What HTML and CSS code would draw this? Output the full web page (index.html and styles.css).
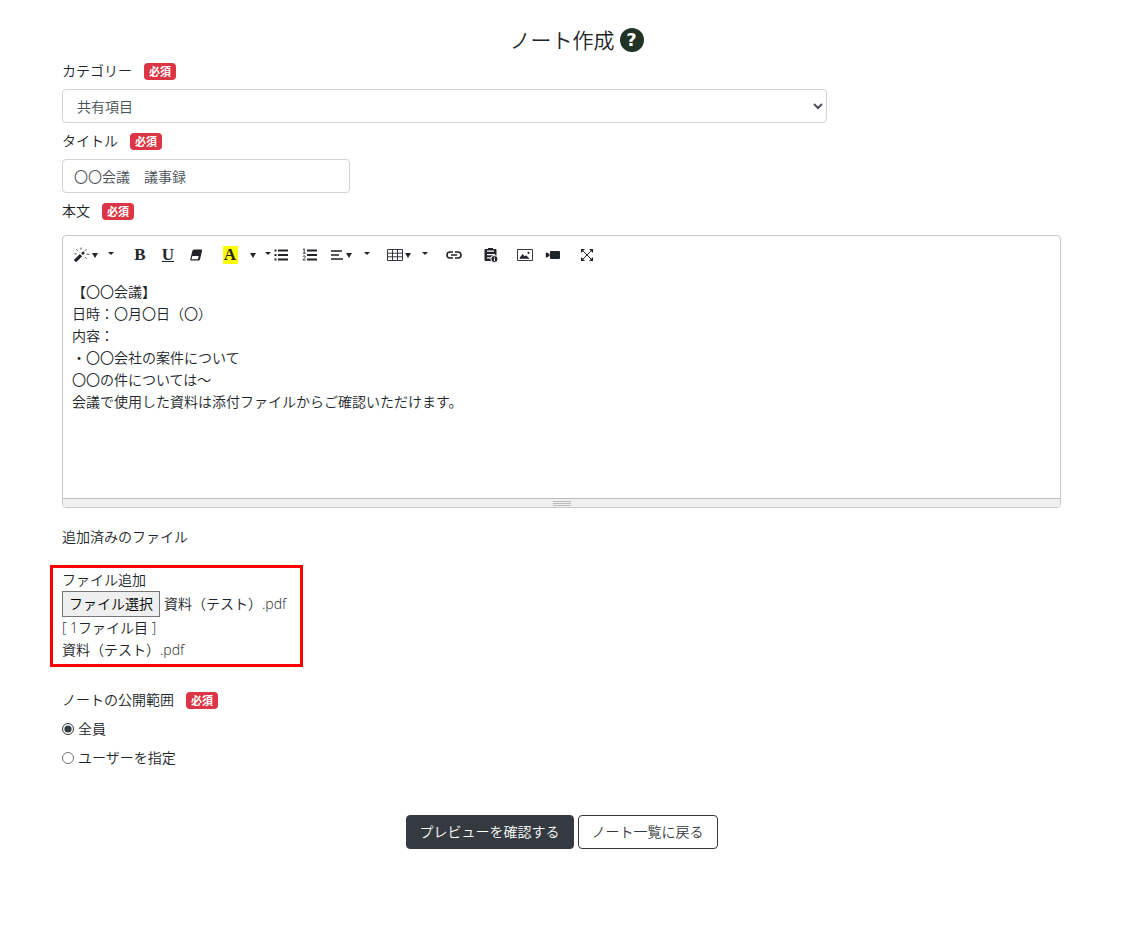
FILE: index.html
```html
<!DOCTYPE html>
<html lang="ja">
<head>
  <meta charset="UTF-8">
  <meta name="viewport" content="width=device-width, initial-scale=1.0">
  <title>ノート作成</title>
  <link rel="stylesheet" href="styles.css">
</head>
<body>
  <main class="container">
    <h1 class="page-title">ノート作成 <a class="help" href="#">?</a></h1>
    <form>
      <div class="form-label">
        <label for="category">カテゴリー</label><span class="badge">必須</span>
      </div>
      <select class="form-control category" id="category">
        <option>共有項目</option>
      </select>

      <div class="form-label">
        <label for="title">タイトル</label><span class="badge">必須</span>
      </div>
      <input class="form-control title" id="title" type="text" value="〇〇会議　議事録">

      <div class="form-label">
        <span id="body-label">本文</span><span class="badge">必須</span>
      </div>
      <div class="editor">
        <div class="toolbar">
          <div class="group">
            <button type="button" class="tool drop" aria-label="スタイル">
              <svg width="17" height="16" viewBox="0 0 17 16"><path d="M2 14.2 8 8.2" stroke-width="3.2"/><path d="M9 7.2l2-2" stroke-width="2.4"/><path d="M8 .5v2.2M3.3 2.3l1.5 1.5M13.2 2.3l-1.6 1.6M1.5 6.8h2.2M13.5 7.3h3M12 10.2l1.6 1.6" stroke-width=".8"/></svg><i class="caret"></i>
            </button>
            <button type="button" class="tool more" aria-label="その他のスタイル"><i class="caret small"></i></button>
          </div>
          <div class="group">
            <button type="button" class="tool letter">B</button>
            <button type="button" class="tool letter"><u>U</u></button>
            <button type="button" class="tool" aria-label="書式クリア">
              <svg width="14" height="14" viewBox="0 0 14 14"><path class="fill" d="M5 1.5h7q1.4 0 1.1 1.2l-2 8.3q-.3 1.5-1.5 1.5H2.4q-1.4 0-1.1-1.2l2-8.3q.3-1.5 1.7-1.5z"/><path class="hole" d="M3.3 8h6.4l-.8 3.2H2.5z"/></svg>
            </button>
          </div>
          <div class="group">
            <button type="button" class="tool letter"><span class="mark">A</span></button>
            <button type="button" class="tool more" aria-label="文字色"><i class="caret"></i></button>
            <button type="button" class="tool list-more" aria-label="その他の色"><i class="caret small"></i></button>
            <button type="button" class="tool list" aria-label="箇条書き">
              <svg width="16" height="14" viewBox="0 0 16 14"><path d="M4 2.5h10M4 7h10M4 11.5h10" stroke-width="2"/><path d="M.5 2.5h2M.5 7h2M.5 11.5h2" stroke-width="2"/></svg>
            </button>
            <button type="button" class="tool" aria-label="番号付きリスト">
              <svg width="16" height="14" viewBox="0 0 16 14"><path d="M5 2.5h10M5 7h10M5 11.5h10" stroke-width="2"/><path d="M1 1.5l1.2-.8v4.6M1 5.3h2.6M.9 8.6c.5-1.2 2.4-1 2.4.2 0 1-1.3 1.8-2.4 3.2h2.8" stroke-width=".9"/></svg>
            </button>
            <button type="button" class="tool drop" aria-label="段落">
              <svg width="14" height="14" viewBox="0 0 14 14"><path d="M1 3h11M1 7h8M1 11h12" stroke-width="1.6"/></svg><i class="caret"></i>
            </button>
            <button type="button" class="tool more" aria-label="その他の段落"><i class="caret small"></i></button>
          </div>
          <div class="group">
            <button type="button" class="tool drop" aria-label="表">
              <svg width="16" height="14" viewBox="0 0 16 14"><path d="M.5 1.5h15v11H.5zM.5 5.2h15M.5 8.8h15M5.5 1.5v11M10.5 1.5v11" stroke-width=".9"/></svg><i class="caret"></i>
            </button>
            <button type="button" class="tool more" aria-label="その他の表"><i class="caret small"></i></button>
          </div>
          <div class="group">
            <button type="button" class="tool" aria-label="リンク">
              <svg width="16" height="14" viewBox="0 0 16 14"><path d="M7 4H4a3 3 0 0 0 0 6h3M9 4h3a3 3 0 0 1 0 6H9M5 7h6" stroke-width="1.6"/></svg>
            </button>
          </div>
          <div class="group file">
            <button type="button" class="tool" aria-label="ファイル情報">
              <svg width="14" height="16" viewBox="0 0 14 16"><path class="fill" d="M1.5 2H4V1h5v1h2.5q1 0 1 1v11h-11q-1 0-1-1V3q0-1 1-1z"/><path class="hole" d="M3 3.6h7v1.2H3zM3 7h8v1.3H3zM3 10.3h4v1.3H3z"/><circle class="badge-dot" cx="10.4" cy="12" r="3.6"/><path class="light" d="M10.4 9.7v1M10.4 11.4v2.8"/></svg>
            </button>
          </div>
          <div class="group">
            <button type="button" class="tool" aria-label="画像">
              <svg width="16" height="14" viewBox="0 0 16 14"><path d="M.5 1.5h15v11H.5z" stroke-width=".9"/><path class="fill" d="M2.8 10.8V9.5L5.7 6l2 2.4 1.3-1.2 3.7 3.6z"/><circle class="fill" cx="11.5" cy="4.8" r="1.1"/></svg>
            </button>
            <button type="button" class="tool" aria-label="動画">
              <svg width="16" height="14" viewBox="0 0 16 14"><rect class="fill" x="5" y="3" width="10" height="8" rx="1"/><path class="fill" d="M.8 4.5h1L4.5 6v2L1.8 9.5h-1z"/></svg>
            </button>
          </div>
          <div class="group">
            <button type="button" class="tool" aria-label="フルスクリーン">
              <svg width="14" height="14" viewBox="0 0 14 14"><path d="M2.5 2.5l9 9M11.5 2.5l-9 9"/><path class="fill" d="M1 1h4L1 5zM13 1v4L9 1zM1 13V9l4 4zM13 13H9l4-4z"/></svg>
            </button>
          </div>
        </div>
        <div class="editable" contenteditable="true" role="textbox" aria-multiline="true" aria-labelledby="body-label">
          <p>【〇〇会議】</p>
          <p>日時：〇月〇日（〇）</p>
          <p>内容：</p>
          <p>・〇〇会社の案件について</p>
          <p>〇〇の件については～</p>
          <p>会議で使用した資料は添付ファイルからご確認いただけます。</p>
        </div>
        <div class="statusbar"><i></i><i></i><i></i></div>
      </div>

      <p class="added">追加済みのファイル</p>
      <div class="upload">
        <p>ファイル追加</p>
        <div class="picker">
          <input class="file-input" id="file" type="file">
          <label class="file-button" for="file">ファイル選択</label>
          <span>資料（テスト）.pdf</span>
        </div>
        <p>[ 1ファイル目 ]</p>
        <p>資料（テスト）.pdf</p>
      </div>

      <div class="form-label" id="scope-label">
        <span>ノートの公開範囲</span><span class="badge">必須</span>
      </div>
      <div class="scope" role="radiogroup" aria-labelledby="scope-label">
        <label><input type="radio" name="scope" checked>全員</label>
        <label><input type="radio" name="scope">ユーザーを指定</label>
      </div>

      <div class="actions">
        <button type="button" class="btn dark">プレビューを確認する</button>
        <button type="button" class="btn">ノート一覧に戻る</button>
      </div>
    </form>
  </main>
</body>
</html>
```
FILE: styles.css
```css
* {
  box-sizing: border-box;
}
body {
  margin: 0;
  background: #fff;
  color: #212529;
  font-family: "Open Sans", "Noto Sans CJK JP", sans-serif;
  font-size: 14px;
  font-weight: 350;
  line-height: 22px;
}
button, input, select {
  font: inherit;
}
p {
  margin: 0;
}
.container {
  padding: 24px 75px 24px 62px;
}
.page-title {
  display: flex;
  align-items: center;
  justify-content: center;
  gap: 5px;
  margin: 0 0 4px 30px;
  font-size: 21px;
  font-weight: 350;
  line-height: 32px;
}
.help {
  width: 24px;
  height: 24px;
  border-radius: 50%;
  background: #213324;
  color: #fff;
  font-family: "DejaVu Sans", sans-serif;
  font-size: 18px;
  font-weight: bold;
  line-height: 24px;
  text-align: center;
  text-decoration: none;
}
.form-label {
  display: flex;
  align-items: center;
  gap: 12px;
  margin-bottom: 7px;
}
.badge {
  padding: 0 5px;
  border-radius: 4px;
  background: #dc3545;
  color: #fff;
  font-size: 11px;
  font-weight: bold;
  line-height: 17px;
}
.form-control {
  display: block;
  height: 34px;
  margin-bottom: 7px;
  padding: 0 11px;
  border: 1px solid #ced4da;
  border-radius: 4px;
  background: #fff;
  color: #495057;
}
.category {
  width: 100%;
  max-width: 765px;
  padding: 0 0 0 10px;
}
.title {
  width: 288px;
}

/* editor */
.editor {
  margin-top: 13px;
  border: 1px solid #c8c8c8;
  border-radius: 4px;
  overflow: hidden;
}
.toolbar {
  display: flex;
  flex-wrap: wrap;
  padding: 5px 5px 2px;
}
.group {
  display: flex;
  margin-right: 6px;
}
.group.file {
  margin-left: 3px;
}
.tool {
  display: flex;
  align-items: center;
  justify-content: center;
  width: 28px;
  height: 28px;
  padding: 0;
  border: 0;
  background: none;
  color: #212529;
}
.tool.drop {
  gap: 2px;
  width: 34px;
}
.tool.more {
  width: 18px;
}
.tool.list-more {
  width: 12px;
}
.tool.list {
  justify-content: flex-start;
  width: 22px;
}
.letter {
  font-family: "Liberation Serif", serif;
  font-size: 17px;
  font-weight: bold;
}
.letter u {
  text-decoration-thickness: 1px;
}
.mark {
  width: 15px;
  background: #ff0;
  line-height: 18px;
}
.caret {
  border: 3px solid transparent;
  border-top: 5px solid #212529;
  border-bottom: 0;
}
.caret.small {
  margin-bottom: 3px;
  border-top-width: 3px;
}
svg {
  fill: none;
  stroke: #212529;
}
svg .fill {
  fill: #212529;
  stroke: none;
}
svg .hole {
  fill: #fff;
  stroke: none;
}
svg .badge-dot {
  fill: #212529;
  stroke: #fff;
}
svg .light {
  stroke: #fff;
}
.editable {
  min-height: 227px;
  padding: 10px 9px;
  outline: none;
}
.statusbar {
  display: flex;
  flex-direction: column;
  align-items: center;
  gap: 1px;
  height: 9px;
  padding-top: 2px;
  border-top: 1px solid #bbb;
  background: #f0f0f0;
}
.statusbar i {
  width: 18px;
  border-top: 1px solid #bbb;
}

/* files */
.added {
  margin: 18px 0 17px;
}
.upload {
  width: fit-content;
  margin: 0 0 22px -12px;
  padding: 1px 14px 3px 9px;
  border: 3px solid #f00;
}
.picker {
  display: flex;
  align-items: center;
  gap: 4px;
}
.file-input {
  position: absolute;
  width: 1px;
  height: 1px;
  opacity: 0;
}
.file-button {
  padding: 1px 6px;
  border: 1px solid #767676;
  background: #efefef;
  color: #000;
}
.scope {
  display: grid;
  gap: 7px;
}
.scope label {
  display: flex;
  align-items: center;
  gap: 4px;
}
.scope input {
  width: 12px;
  height: 12px;
  margin: 0;
  accent-color: #343a40;
}
.actions {
  display: flex;
  justify-content: center;
  gap: 4px;
  margin-top: 46px;
}
.btn {
  height: 34px;
  padding: 0 13px;
  border: 1px solid #343a40;
  border-radius: 4px;
  background: #fff;
  color: #343a40;
}
.btn.dark {
  background: #343a40;
  color: #fff;
}
```
